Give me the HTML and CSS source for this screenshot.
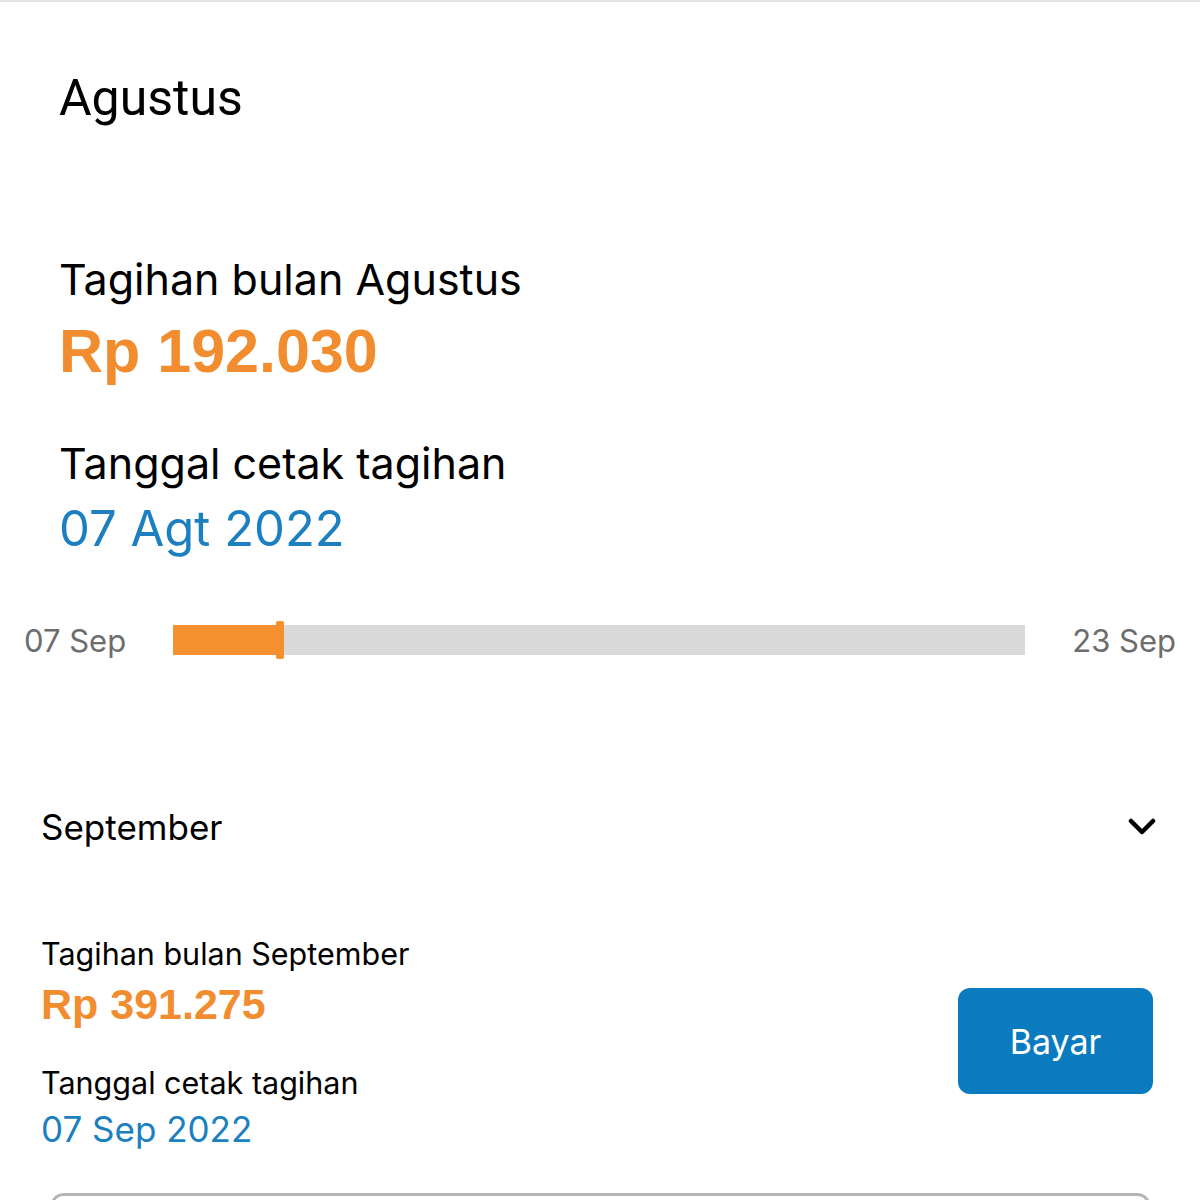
FILE: index.html
```html
<!DOCTYPE html>
<html lang="id">
<head>
  <meta charset="UTF-8">
  <meta name="viewport" content="width=device-width, initial-scale=1.0">
  <title>Tagihan</title>
  <link rel="stylesheet" href="styles.css">
</head>
<body>
  <div class="screen">
    <!-- Agustus -->
    <section class="month-open">
      <h2 class="month-title">Agustus</h2>
      <div class="bill-big">
        <p class="label">Tagihan bulan Agustus</p>
        <p class="amount">Rp 192.030</p>
        <p class="label label-gap">Tanggal cetak tagihan</p>
        <p class="date">07 Agt 2022</p>
      </div>
      <div class="timeline">
        <span class="tl-date">07 Sep</span>
        <div class="track">
          <div class="track-fill" style="width: 12.6%"></div>
        </div>
        <span class="tl-date">23 Sep</span>
      </div>
    </section>

    <!-- September -->
    <section class="month-row">
      <div class="month-head">
        <span class="month-name">September</span>
        <svg class="chevron" width="28" height="18" viewBox="0 0 28 18">
          <path d="M3 3 L14 14 L25 3" fill="none" stroke="#000" stroke-width="4.5" stroke-linecap="round" stroke-linejoin="round"/>
        </svg>
      </div>
      <div class="bill-small">
        <div class="bill-info">
          <p class="s-label">Tagihan bulan September</p>
          <p class="s-amount">Rp 391.275</p>
          <p class="s-label s-gap">Tanggal cetak tagihan</p>
          <p class="s-date">07 Sep 2022</p>
        </div>
        <button class="pay-btn">Bayar</button>
      </div>
    </section>

    <div class="next-card"></div>
  </div>
</body>
</html>
```

FILE: styles.css
```css
/* Base */
body {
  margin: 0;
  background: #fff;
  font-family: Inter, "Liberation Sans", sans-serif;
  color: #000;
}

p {
  margin: 0;
}

.screen {
  width: 1200px;
  height: 1200px;
  overflow: hidden;
  border-top: 2px solid #e2e2e2;
  box-sizing: border-box;
}

/* Agustus block */
.month-open {
  padding: 0 0 0 59px;
}

.month-title {
  margin: 0;
  padding-top: 68px;
  font-family: Roboto, sans-serif;
  font-weight: 400;
  font-size: 50px;
  line-height: 56px;
}

.bill-big {
  padding-top: 123px;
}

.label {
  font-size: 43px;
  line-height: 60px;
}

.label-gap {
  margin-top: 40px;
}

.amount {
  font-family: "Liberation Sans", sans-serif;
  font-weight: 700;
  font-size: 61px;
  line-height: 84px;
  color: #f28d2f;
}

.date {
  font-size: 49px;
  line-height: 72px;
  color: #1b7fc0;
}

.timeline {
  display: flex;
  align-items: center;
  height: 40px;
  margin: 55px 0 0 -59px;
  padding: 0 24px;
  gap: 47px;
}

.tl-date {
  font-size: 31px;
  color: #6d6d6d;
}

.track {
  flex: 1;
  height: 30px;
  background: #d9d9d9;
  position: relative;
}

.track-fill {
  height: 100%;
  background: #f5902f;
  position: relative;
}

.track-fill::after {
  content: "";
  position: absolute;
  right: -3px;
  top: -4px;
  width: 8px;
  height: 38px;
  background: #f5902f;
  border-radius: 2px;
}

/* September block */
.month-row {
  padding: 0 47px 0 41px;
}

.month-head {
  display: flex;
  justify-content: space-between;
  align-items: center;
  margin-top: 145px;
}

.month-name {
  font-size: 35px;
  line-height: 44px;
}

.chevron {
  margin-right: -3px;
}

.bill-small {
  display: flex;
  align-items: flex-start;
  justify-content: space-between;
  margin-top: 85px;
}

.s-label {
  font-size: 30.5px;
  line-height: 40px;
}

.s-gap {
  margin-top: 29px;
}

.s-amount {
  font-family: "Liberation Sans", sans-serif;
  font-weight: 700;
  font-size: 43px;
  line-height: 60px;
  color: #f28d2f;
}

.s-date {
  font-size: 35px;
  line-height: 52px;
  color: #1b7fc0;
}

.pay-btn {
  width: 195px;
  height: 106px;
  margin-top: 54px;
  border: none;
  border-radius: 12px;
  background: #0b7bc0;
  color: #fff;
  font-family: Inter, sans-serif;
  font-size: 34px;
}

.next-card {
  margin: 38px 49px 0 50px;
  height: 60px;
  border: 3px solid #b5b5b5;
  border-bottom: none;
  border-radius: 14px 14px 0 0;
}
```
